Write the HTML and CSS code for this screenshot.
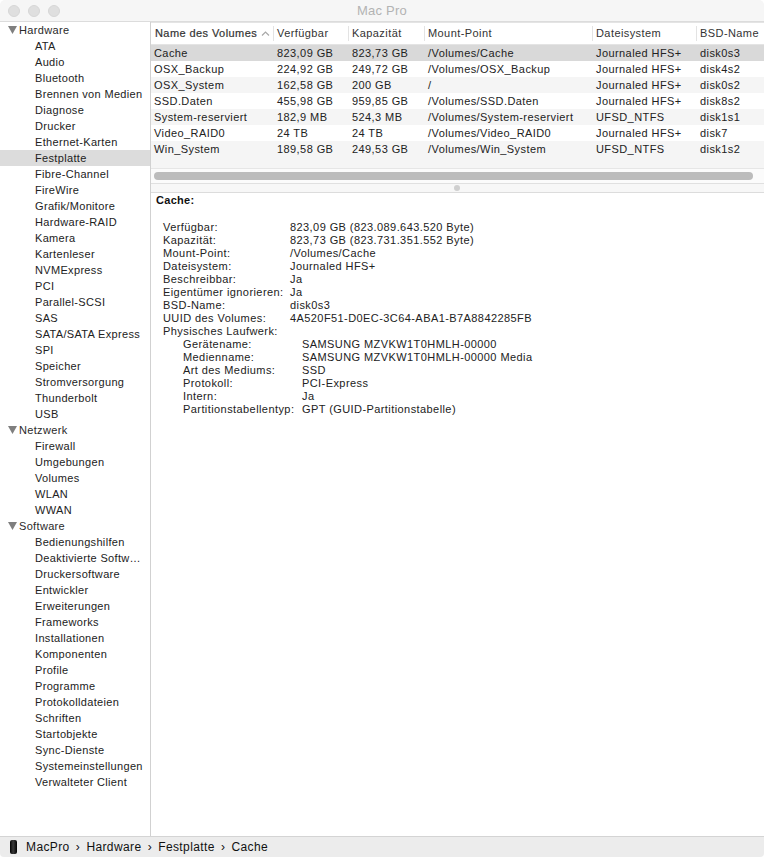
FILE: index.html
```html
<!DOCTYPE html>
<html lang="de">
<head>
<meta charset="utf-8">
<title>Mac Pro</title>
<link rel="stylesheet" href="styles.css">
</head>
<body>
<div class="window">
  <header class="titlebar">
    <div class="lights"><span class="light"></span><span class="light"></span><span class="light"></span></div>
    <div class="title">Mac Pro</div>
  </header>
  <div class="main">
    <nav class="sidebar">
      <div class="group"><svg class="tri" viewBox="0 0 9 8"><path d="M0 0H9L4.5 8Z"/></svg>Hardware</div>
      <div class="item">ATA</div>
      <div class="item">Audio</div>
      <div class="item">Bluetooth</div>
      <div class="item">Brennen von Medien</div>
      <div class="item">Diagnose</div>
      <div class="item">Drucker</div>
      <div class="item">Ethernet-Karten</div>
      <div class="item selected">Festplatte</div>
      <div class="item">Fibre-Channel</div>
      <div class="item">FireWire</div>
      <div class="item">Grafik/Monitore</div>
      <div class="item">Hardware-RAID</div>
      <div class="item">Kamera</div>
      <div class="item">Kartenleser</div>
      <div class="item">NVMExpress</div>
      <div class="item">PCI</div>
      <div class="item">Parallel-SCSI</div>
      <div class="item">SAS</div>
      <div class="item">SATA/SATA Express</div>
      <div class="item">SPI</div>
      <div class="item">Speicher</div>
      <div class="item">Stromversorgung</div>
      <div class="item">Thunderbolt</div>
      <div class="item">USB</div>
      <div class="group"><svg class="tri" viewBox="0 0 9 8"><path d="M0 0H9L4.5 8Z"/></svg>Netzwerk</div>
      <div class="item">Firewall</div>
      <div class="item">Umgebungen</div>
      <div class="item">Volumes</div>
      <div class="item">WLAN</div>
      <div class="item">WWAN</div>
      <div class="group"><svg class="tri" viewBox="0 0 9 8"><path d="M0 0H9L4.5 8Z"/></svg>Software</div>
      <div class="item">Bedienungshilfen</div>
      <div class="item">Deaktivierte Softw…</div>
      <div class="item">Druckersoftware</div>
      <div class="item">Entwickler</div>
      <div class="item">Erweiterungen</div>
      <div class="item">Frameworks</div>
      <div class="item">Installationen</div>
      <div class="item">Komponenten</div>
      <div class="item">Profile</div>
      <div class="item">Programme</div>
      <div class="item">Protokolldateien</div>
      <div class="item">Schriften</div>
      <div class="item">Startobjekte</div>
      <div class="item">Sync-Dienste</div>
      <div class="item">Systemeinstellungen</div>
      <div class="item">Verwalteter Client</div>
    </nav>
    <section class="content">
      <div class="table">
        <div class="thead">
          <div class="th th-name"><b>Name des Volumes</b><svg class="sort" viewBox="0 0 9 5"><path d="M1 4.5L4.5 1L8 4.5"/></svg></div>
          <div class="th">Verfügbar</div>
          <div class="th">Kapazität</div>
          <div class="th">Mount-Point</div>
          <div class="th">Dateisystem</div>
          <div class="th th-last">BSD-Name</div>
        </div>
        <div class="tr sel"><span>Cache</span><span>823,09 GB</span><span>823,73 GB</span><span>/Volumes/Cache</span><span>Journaled HFS+</span><span>disk0s3</span></div>
        <div class="tr"><span>OSX_Backup</span><span>224,92 GB</span><span>249,72 GB</span><span>/Volumes/OSX_Backup</span><span>Journaled HFS+</span><span>disk4s2</span></div>
        <div class="tr alt"><span>OSX_System</span><span>162,58 GB</span><span>200 GB</span><span>/</span><span>Journaled HFS+</span><span>disk0s2</span></div>
        <div class="tr"><span>SSD.Daten</span><span>455,98 GB</span><span>959,85 GB</span><span>/Volumes/SSD.Daten</span><span>Journaled HFS+</span><span>disk8s2</span></div>
        <div class="tr alt"><span>System-reserviert</span><span>182,9 MB</span><span>524,3 MB</span><span>/Volumes/System-reserviert</span><span>UFSD_NTFS</span><span>disk1s1</span></div>
        <div class="tr"><span>Video_RAID0</span><span>24 TB</span><span>24 TB</span><span>/Volumes/Video_RAID0</span><span>Journaled HFS+</span><span>disk7</span></div>
        <div class="tr alt"><span>Win_System</span><span>189,58 GB</span><span>249,53 GB</span><span>/Volumes/Win_System</span><span>UFSD_NTFS</span><span>disk1s2</span></div>
        <div class="tr blank"></div>
        <div class="scroller"><div class="thumb"></div></div>
      </div>
      <div class="splitter"><span class="dimple"></span></div>
      <div class="detail">
        <h2 class="heading">Cache:</h2>
        <dl class="props">
          <dt>Verfügbar:</dt><dd>823,09 GB (823.089.643.520 Byte)</dd>
          <dt>Kapazität:</dt><dd>823,73 GB (823.731.351.552 Byte)</dd>
          <dt>Mount-Point:</dt><dd>/Volumes/Cache</dd>
          <dt>Dateisystem:</dt><dd>Journaled HFS+</dd>
          <dt>Beschreibbar:</dt><dd>Ja</dd>
          <dt>Eigentümer ignorieren:</dt><dd>Ja</dd>
          <dt>BSD-Name:</dt><dd>disk0s3</dd>
          <dt>UUID des Volumes:</dt><dd>4A520F51-D0EC-3C64-ABA1-B7A8842285FB</dd>
          <dt class="wide">Physisches Laufwerk:</dt>
        </dl>
        <dl class="props sub">
          <dt>Gerätename:</dt><dd>SAMSUNG MZVKW1T0HMLH-00000</dd>
          <dt>Medienname:</dt><dd>SAMSUNG MZVKW1T0HMLH-00000 Media</dd>
          <dt>Art des Mediums:</dt><dd>SSD</dd>
          <dt>Protokoll:</dt><dd>PCI-Express</dd>
          <dt>Intern:</dt><dd>Ja</dd>
          <dt>Partitionstabellentyp:</dt><dd>GPT (GUID-Partitionstabelle)</dd>
        </dl>
      </div>
    </section>
  </div>
  <footer class="pathbar">
    <svg class="mac" viewBox="0 0 8 14"><defs><linearGradient id="cyl" x1="0" x2="1" y1="0" y2="0"><stop offset="0" stop-color="#000"/><stop offset=".45" stop-color="#3a3a3a"/><stop offset="1" stop-color="#000"/></linearGradient></defs><rect x="0.5" y="0" width="7" height="14" rx="2" fill="url(#cyl)"/></svg>
    <span>MacPro</span><span class="sep">›</span><span>Hardware</span><span class="sep">›</span><span>Festplatte</span><span class="sep">›</span><span>Cache</span>
  </footer>
</div>
</body>
</html>
```
FILE: styles.css
```css
* { box-sizing: border-box; }
html, body { margin: 0; padding: 0; background: #fff; }
body { font-family: "Liberation Sans", Arial, sans-serif; font-size: 11px; color: #222; }
.window { width: 764px; height: 857px; display: flex; flex-direction: column; overflow: hidden; border-radius: 5px 5px 4px 4px; }
.titlebar { height: 22px; flex: none; background: #f6f6f6; border-bottom: 1px solid #dcdcdc; position: relative; display: flex; align-items: center; }
.lights { display: flex; gap: 8px; padding-left: 8px; }
.light { width: 12px; height: 12px; border-radius: 50%; background: #dfdfdf; border: 1px solid #d6d6d6; }
.title { position: absolute; left: 0; right: 0; top: 3px; text-align: center; font-size: 13px; line-height: 16px; letter-spacing: 0.2px; color: #b3b3b3; }
.main { flex: 1; display: flex; min-height: 0; }
.sidebar { width: 151px; flex: none; border-right: 1px solid #d1d1d1; background: #fff; overflow: hidden; }
.group, .item { height: 16px; line-height: 16px; white-space: nowrap; letter-spacing: 0.33px; }
.group { padding-left: 8px; display: flex; align-items: center; color: #2a2a2a; }
.tri { width: 9px; height: 8px; margin-right: 2px; fill: #7f7f7f; }
.item { padding-left: 35px; }
.selected { background: #dcdcdc; }
.content { flex: 1; min-width: 0; display: flex; flex-direction: column; }
.table { flex: none; }
.thead, .tr { display: grid; grid-template-columns: 123px 75px 76px 168px 104px 1fr; }
.thead { height: 23px; background: #fff; border-top: 1px solid #e4e4e4; border-bottom: 1px solid #e4e4e4; align-items: center; }
.th { height: 15px; line-height: 15px; padding-left: 3px; border-right: 1px solid #e3e3e3; color: #333; white-space: nowrap; letter-spacing: 0.42px; }
.th-name { padding-left: 4px; display: flex; align-items: center; justify-content: space-between; padding-right: 3px; }
.th-name b { font-weight: normal; -webkit-text-stroke: 0.2px #333; }
.th-last { border-right: 0; }
.sort { width: 9px; height: 5px; fill: none; stroke: #a8a8a8; stroke-width: 1.2; }
.tr { height: 16px; line-height: 16px; white-space: nowrap; letter-spacing: 0.42px; }
.tr span { padding-left: 3px; overflow: visible; }
.sel { background: #d9d9d9; }
.alt, .blank { background: #f5f5f5; }
.blank { height: 12px; border-bottom: 1px solid #e6e6e6; }
.scroller { height: 15px; background: #fbfbfb; border-bottom: 1px solid #e0e0e0; padding: 3px 11px 0 3px; }
.thumb { height: 8px; border-radius: 4px; background: #bcbcbc; }
.splitter { height: 9px; flex: none; background: #f7f7f7; border-bottom: 1px solid #dcdcdc; display: flex; justify-content: center; align-items: center; padding-right: 2px; }
.dimple { width: 6px; height: 6px; border-radius: 50%; background: #cfcfcf; }
.detail { flex: 1; padding: 0 5px; line-height: 13px; }
.heading { margin: 0; padding: 1px 0 0 0; height: 28px; font-size: 11px; line-height: 13px; font-weight: bold; letter-spacing: 0.3px; color: #111; }
.props { margin: 0; padding-left: 7px; display: grid; grid-template-columns: 127px 1fr; letter-spacing: 0.42px; }
.props dt, .props dd { margin: 0; height: 13px; white-space: nowrap; }
.wide { grid-column: 1 / -1; }
.sub { padding-left: 27px; grid-template-columns: 119px 1fr; }
.pathbar { height: 21px; flex: none; background: #ececec; border-top: 1px solid #d4d4d4; display: flex; align-items: center; padding-left: 9px; font-size: 12px; letter-spacing: 0.38px; color: #111; white-space: nowrap; }
.mac { width: 9px; height: 14px; margin-right: 8px; }
.sep { margin: 0 6.2px; }
```
